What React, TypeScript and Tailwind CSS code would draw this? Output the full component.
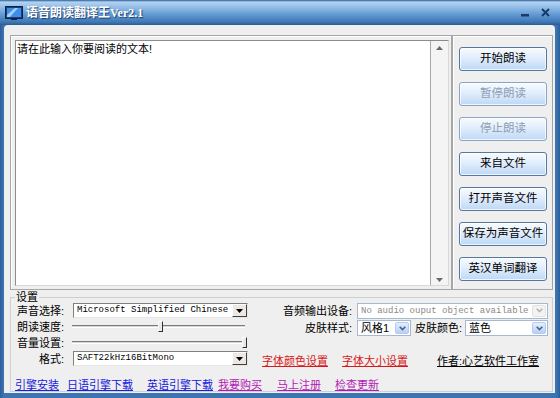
import React from 'react'

const buttons = [
  { label: '开始朗读' },
  { label: '暂停朗读', disabled: true },
  { label: '停止朗读', disabled: true },
  { label: '来自文件' },
  { label: '打开声音文件' },
  { label: '保存为声音文件' },
  { label: '英汉单词翻译' },
]

function AppIcon() {
  return (
    <svg width="18" height="14" viewBox="0 0 18 14">
      <rect x="0.5" y="0.5" width="17" height="12" fill="#1d3f73" stroke="#0c2449" />
      <rect x="2" y="2" width="14" height="9" fill="#3d8ee8" />
      <path d="M2 9 L10 2 L13 2 L5 11 L2 11 Z" fill="#9fd0ff" />
      <rect x="6" y="12.5" width="6" height="1.5" fill="#0c2449" />
    </svg>
  )
}

function ChevronDown({ color }: { color: string }) {
  return (
    <svg width="7" height="5" viewBox="0 0 7 5">
      <path d="M0.7 0.8 L3.5 3.6 L6.3 0.8" stroke={color} strokeWidth="1.6" fill="none" />
    </svg>
  )
}

function ClassicSelect({ value, className }: { value: string; className: string }) {
  return (
    <div className={`${className} flex h-[15px] items-stretch border border-[#808080] border-b-[#e6e6e6] border-r-[#e6e6e6] bg-white`}>
      <span className="flex-1 overflow-hidden whitespace-nowrap pl-[3px] font-['Liberation_Mono',monospace] text-[9px] leading-[13px] text-black">
        {value}
      </span>
      <span className="flex w-[15px] items-center justify-center border border-[#fdfdfd] border-b-[#404040] border-r-[#404040] bg-[#ece9e4]">
        <svg width="7" height="4" viewBox="0 0 7 4">
          <path d="M0 0 H7 L3.5 4 Z" fill="#000" />
        </svg>
      </span>
    </div>
  )
}

function XpSelect({ value, className, disabled, mono }: { value: string; className: string; disabled?: boolean; mono?: boolean }) {
  return (
    <div className={`${className} flex h-[16px] items-stretch border border-[#a5b9d3] bg-white p-[1px]`}>
      <span
        className={`flex-1 overflow-hidden whitespace-nowrap pl-[2px] ${
          mono ? "font-['Liberation_Mono',monospace] text-[9px] leading-[12px]" : 'text-[11px] leading-[12px]'
        } ${disabled ? 'text-[#8a8a8a]' : 'text-black'}`}
      >
        {value}
      </span>
      <span
        className={`flex w-[14px] items-center justify-center rounded-[2px] border ${
          disabled ? 'border-[#e2e2e2] bg-[#f3f3f3]' : 'border-[#b6cbef] bg-linear-to-b from-[#e4eefd] to-[#b7d0f7]'
        }`}
      >
        <ChevronDown color={disabled ? '#b4b4b4' : '#4d6185'} />
      </span>
    </div>
  )
}

function Slider({ trackClass, thumbClass }: { trackClass: string; thumbClass: string }) {
  return (
    <div className={`${trackClass} relative h-[14px]`}>
      <div className="mt-[5px] h-[3px] border-t border-b border-t-[#7c7c7c] border-b-white bg-[#d6d6d6]" />
      <div className={`${thumbClass} absolute top-[1px] h-[11px] w-[5px] border border-[#fefefe] border-b-[#303030] border-r-[#303030] bg-[#ece9e4]`} />
    </div>
  )
}

function Btn({ label, disabled }: { label: string; disabled?: boolean }) {
  return (
    <div
      className={`flex h-[24px] w-[88px] items-center justify-center rounded-[3px] border bg-[linear-gradient(to_bottom,#f8fbff,#e1edfc_45%,#bdd8f5)] text-[11.5px] shadow-[inset_0_0_0_1px_rgba(255,255,255,0.75)] ${
        disabled ? 'border-[#8ba4c3] text-[#8c9db4]' : 'border-[#56779f] text-black'
      }`}
    >
      {label}
    </div>
  )
}

export default function App() {
  return (
    <div className="flex h-[398px] w-[560px] flex-col overflow-hidden bg-[linear-gradient(to_right,#2b5f9b,#3d75b3_4px,#3d75b3_556px,#2b5f9b)] font-['Liberation_Sans','Noto_Sans_CJK_SC',sans-serif] text-[11px] text-black select-none">
      {/* title bar */}
      <div className="flex h-[25px] items-center bg-[linear-gradient(to_bottom,#2d5f98_0px,#b3d2f0_2px,#8dbae6_8px,#5f97d0_15px,#3f78b6_22px,#2a5b93_25px)] pl-[5px] pr-[10px]">
        <AppIcon />
        <span className="ml-[3px] text-[12px] font-bold leading-[14px] text-white [text-shadow:1px_1px_1px_#1b3d6b]">
          语音朗读翻译王
          <span className="font-['Liberation_Serif',serif] text-[12px]">Ver2.1</span>
        </span>
        <div className="ml-auto flex items-center gap-[12px]">
          <svg width="8" height="8" viewBox="0 0 8 8">
            <rect x="0" y="5" width="8" height="2.5" fill="#173a69" />
          </svg>
          <svg width="9" height="9" viewBox="0 0 9 9">
            <path d="M1 1 L8 8 M8 1 L1 8" stroke="#173a69" strokeWidth="2" />
          </svg>
        </div>
      </div>

      {/* client */}
      <div className="mx-[4px] mb-[5px] ml-[4px] mr-[5px] flex flex-1 flex-col rounded-t-[4px] bg-[#efefef] pl-[6px] pr-[2px] pt-[10px]">
        <div className="flex h-[255px]">
          <div className="flex w-[442px] border border-[#a6a6a6] pb-[3px] pl-[4px] pr-[2px] pt-[4px] shadow-[inset_1px_1px_0_#ffffff]">
            <div className="flex flex-1 border border-[#8c8c8c] border-b-[#d8d8d8] border-r-[#d8d8d8]">
              <div className="flex-1 border-r border-[#a8a8a8] bg-white pl-[1px] pt-[2px] leading-[12px]">
                请在此输入你要阅读的文本!
              </div>
              <div className="flex w-[17px] flex-col items-center justify-between bg-[#f4f4f4] pb-[3px] pt-[5px]">
                <svg width="7" height="4" viewBox="0 0 7 4">
                  <path d="M0 4 L3.5 0 L7 4 Z" fill="#6b6b6b" />
                </svg>
                <svg width="7" height="4" viewBox="0 0 7 4">
                  <path d="M0 0 H7 L3.5 4 Z" fill="#6b6b6b" />
                </svg>
              </div>
            </div>
          </div>
          <div className="flex w-[101px] flex-col gap-[11px] border border-[#a6a6a6] pl-[6px] pt-[11px] shadow-[inset_1px_1px_0_#ffffff]">
            {buttons.map((b) => (
              <Btn key={b.label} label={b.label} disabled={b.disabled} />
            ))}
          </div>
        </div>

        {/* settings */}
        <fieldset className="mb-[1px] mt-[1px] flex flex-1 flex-col border border-[#cfcfcf] pl-[4px]">
          <legend className="px-[1px] text-[11px] leading-[12px]">设置</legend>
          <div className="flex">
            <div className="flex w-[233px] flex-col">
              <div className="flex h-[15px] items-center">
                <span className="w-[49px] text-right leading-[12px]">声音选择:</span>
                <ClassicSelect value="Microsoft Simplified Chinese" className="ml-[9px] w-[175px]" />
              </div>
              <div className="mt-[2px] flex h-[14px] items-center">
                <span className="w-[49px] text-right leading-[12px]">朗读速度:</span>
                <Slider trackClass="ml-[8px] w-[173px]" thumbClass="left-[86px]" />
              </div>
              <div className="mt-[2px] flex h-[14px] items-center">
                <span className="w-[49px] text-right leading-[12px]">音量设置:</span>
                <Slider trackClass="ml-[8px] w-[171px]" thumbClass="left-[170px]" />
              </div>
              <div className="mt-[1px] flex h-[15px] items-center">
                <span className="w-[49px] text-right leading-[12px]">格式:</span>
                <ClassicSelect value="SAFT22kHz16BitMono" className="ml-[9px] w-[175px]" />
              </div>
            </div>

            <div className="ml-[14px] flex w-[286px] flex-col">
              <div className="flex h-[15px] items-center">
                <span className="w-[90px] text-right leading-[12px]">音频输出设备:</span>
                <XpSelect value="No audio ouput object available" className="ml-[5px] w-[191px]" disabled mono />
              </div>
              <div className="mt-[2px] flex h-[16px] items-center">
                <span className="w-[90px] text-right leading-[12px]">皮肤样式:</span>
                <XpSelect value="风格1" className="ml-[5px] w-[54px]" />
                <span className="ml-[4px] leading-[12px]">皮肤颜色:</span>
                <XpSelect value="蓝色" className="ml-[3px] flex-1" />
              </div>
              <div className="mt-[19px] flex leading-[12px]">
                <span className="text-[#d81818] underline">字体颜色设置</span>
                <span className="ml-[14px] text-[#d81818] underline">字体大小设置</span>
                <span className="ml-[29px] underline">作者:心艺软件工作室</span>
              </div>
            </div>
          </div>

          <div className="mt-[12px] flex leading-[12px]">
            <span className="text-[#1620e0] underline">引擎安装</span>
            <span className="ml-[8px] text-[#1620e0] underline">日语引擎下载</span>
            <span className="ml-[14px] text-[#1620e0] underline">英语引擎下载</span>
            <span className="ml-[5px] text-[#b418b4] underline">我要购买</span>
            <span className="ml-[15px] text-[#b418b4] underline">马上注册</span>
            <span className="ml-[14px] text-[#b418b4] underline">检查更新</span>
          </div>
        </fieldset>
      </div>
    </div>
  )
}
